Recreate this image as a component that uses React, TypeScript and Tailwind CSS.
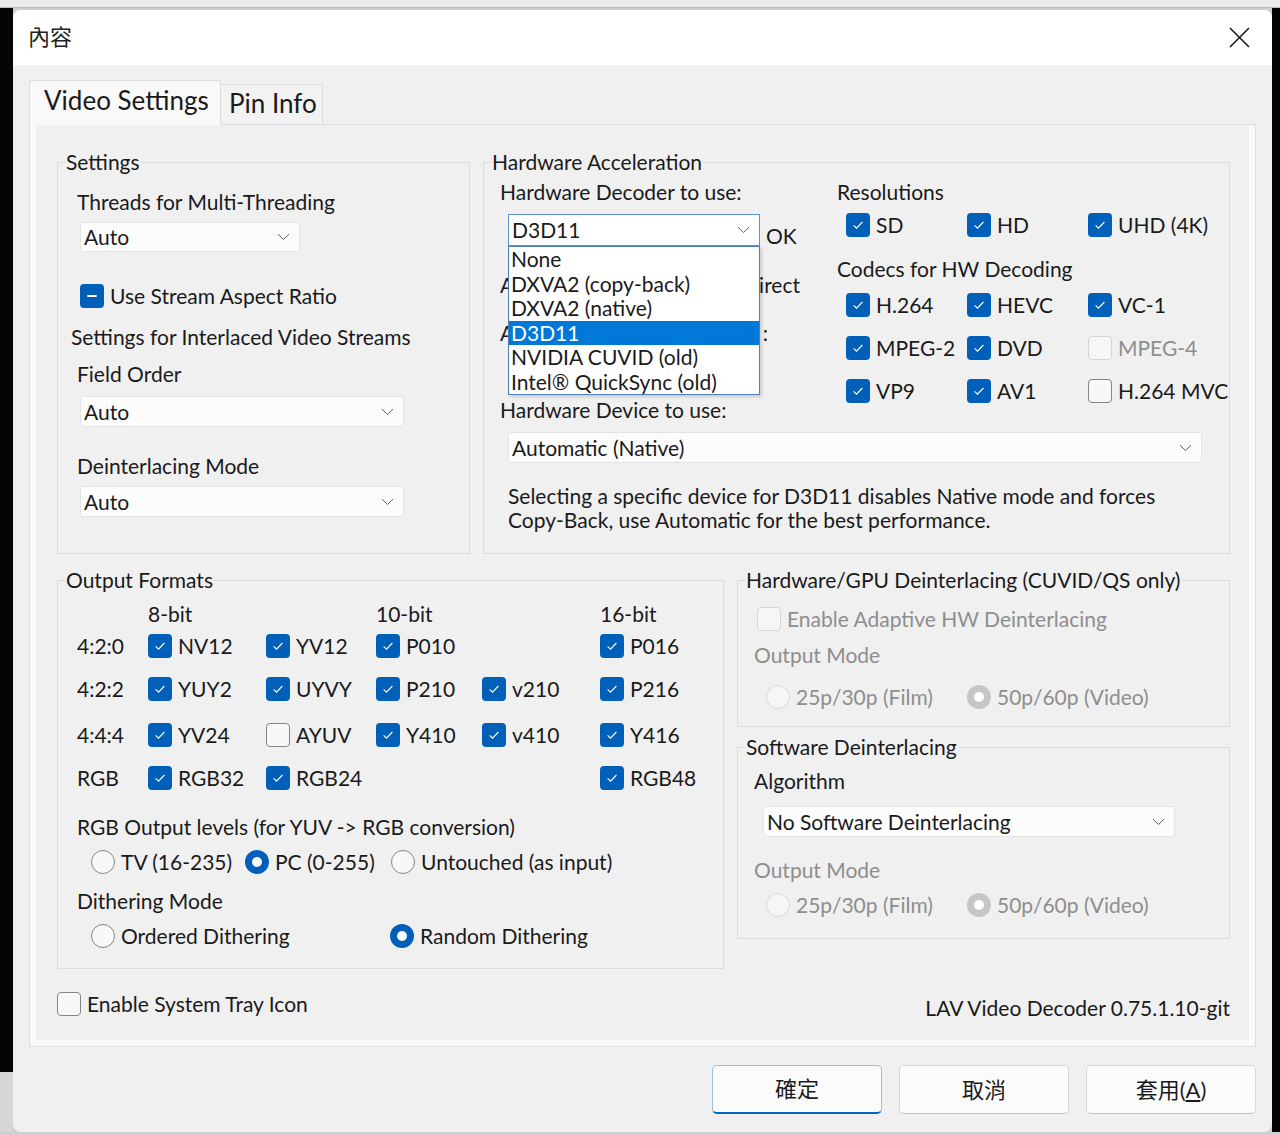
import React from 'react';

type CheckState = 'on' | 'off' | 'mixed';

const Box = ({ state, disabled }: { state: CheckState; disabled?: boolean }) => {
    if (state === 'off') {
        return (
            <span
                className={`w-[24px] h-[24px] rounded-[4px] border shrink-0 ${disabled ? 'border-[#d6d6d6] bg-[#f6f6f6]' : 'border-[#858585] bg-[#f8f8f8]'}`}
            />
        );
    }
    return (
        <span className="w-[24px] h-[24px] rounded-[4px] bg-[#005fb8] flex items-center justify-center shrink-0">
            {state === 'on' ? (
                <svg width="14" height="14" viewBox="0 0 14 14">
                    <path d="M2.6 7.3l2.9 2.8 5.9-6.1" fill="none" stroke="#fff" strokeWidth="1.1" />
                </svg>
            ) : (
                <span className="w-[10px] h-[2px] bg-white rounded-full" />
            )}
        </span>
    );
};

const Check = ({ label, state = 'on', disabled }: { label: string; state?: CheckState; disabled?: boolean }) => (
    <div className="flex items-center gap-[6px] h-[24px] whitespace-nowrap">
        <Box state={state} disabled={disabled} />
        <span className={disabled ? 'text-[#8e8e8e]' : ''}>{label}</span>
    </div>
);

const Radio = ({ label, on, disabled }: { label: string; on?: boolean; disabled?: boolean }) => (
    <div className="flex items-center gap-[6px] h-[24px] whitespace-nowrap">
        {on ? (
            <span className={`w-[24px] h-[24px] rounded-full flex items-center justify-center shrink-0 ${disabled ? 'bg-[#c6c6c6]' : 'bg-[#005fb8]'}`}>
                <span className="w-[10px] h-[10px] rounded-full bg-white" />
            </span>
        ) : (
            <span className={`w-[24px] h-[24px] rounded-full border shrink-0 ${disabled ? 'border-[#d6d6d6] bg-[#f6f6f6]' : 'border-[#858585] bg-[#f8f8f8]'}`} />
        )}
        <span className={disabled ? 'text-[#8e8e8e]' : ''}>{label}</span>
    </div>
);

const Chevron = () => (
    <svg width="13" height="8" viewBox="0 0 13 8" className="shrink-0">
        <path d="M1 1.2l5.5 5.3 5.5-5.3" fill="none" stroke="#606060" strokeWidth="1" />
    </svg>
);

const Select = ({ value, className }: { value: string; className: string }) => (
    <div className={`flex items-center justify-between bg-[#fcfcfc] border border-[#e4e4e4] rounded-[3px] pl-[3px] pr-[9px] ${className}`}>
        <span>{value}</span>
        <Chevron />
    </div>
);

const Group = ({ title, className, children }: { title: string; className: string; children: React.ReactNode }) => (
    <fieldset className={`border border-[#dcdcdc] flex flex-col items-start shrink-0 ${className}`}>
        <legend className="ml-[7px] px-[1px] leading-[24px]">{title}</legend>
        {children}
    </fieldset>
);

const fmtCols = ['w-[118px]', 'w-[110px]', 'w-[106px]', 'w-[118px]', 'w-[100px]'];

const FormatRow = ({ label, cells, className }: { label: string; cells: (string | null | [string, CheckState])[]; className: string }) => (
    <div className={`flex items-center h-[24px] ml-[19px] ${className}`}>
        <span className="w-[71px]">{label}</span>
        {cells.map((c, i) => (
            <div key={i} className={fmtCols[i]}>
                {c === null ? null : Array.isArray(c) ? <Check label={c[0]} state={c[1]} /> : <Check label={c} />}
            </div>
        ))}
    </div>
);

const decoders = ['None', 'DXVA2 (copy-back)', 'DXVA2 (native)', 'D3D11', 'NVIDIA CUVID (old)', 'Intel® QuickSync (old)'];

const App = () => {
    return (
        <div className="w-[1280px] h-[1135px] bg-[#cfcfcf] overflow-hidden flex flex-col font-['Lato','Noto_Sans_CJK_TC',sans-serif] text-[21px] leading-[24px] text-[#1a1a1a]">
            <div className="h-[8px] bg-[#ebebeb] border-b border-[#b8b8b8] shrink-0" />
            <div className="flex h-[1124px] shrink-0">
                <div className="w-[13px] flex flex-col">
                    <div className="h-[1064px] bg-[#050505]" />
                    <div className="flex-1 bg-[#d6d6d6]" />
                </div>
                <div className="w-[1259px] h-[1122px] mt-[2px] rounded-[8px] overflow-hidden bg-[#f0f0f0] flex flex-col">
                    {/* title bar */}
                    <div className="h-[55px] bg-white flex items-center justify-between pl-[15px] pr-[22px] shrink-0">
                        <span className="text-[22px] text-[#222] -mt-[2px]">內容</span>
                        <svg width="21" height="21" viewBox="0 0 21 21">
                            <path d="M1 1l19 19M20 1L1 20" stroke="#1a1a1a" strokeWidth="1.6" />
                        </svg>
                    </div>

                    {/* tabs */}
                    <div className="flex items-end h-[44px] mt-[15px] ml-[16px] text-[26px] leading-[30px] relative z-10">
                        <div className="w-[192px] h-[45px] -mb-px bg-[#f9f9f9] border border-b-0 border-[#dedede] rounded-t-[3px] pl-[14px] pt-[4px]">
                            Video Settings
                        </div>
                        <div className="w-[102px] h-[40px] bg-[#f2f2f2] border border-l-0 border-b-0 border-[#dedede] pl-[8px] pt-[3px]">
                            Pin Info
                        </div>
                    </div>

                    {/* tab panel */}
                    <div className="ml-[16px] w-[1227px] h-[923px] border border-[#dedede] bg-[#f9f9f9] px-[6px] pb-[6px]">
                        <div className="h-[915px] bg-[#f0f0f0] pt-[25px] pl-[21px] flex flex-col">
                            {/* row 1 */}
                            <div className="flex gap-[13px]">
                                <Group title="Settings" className="w-[413px] h-[404px]">
                                    <span className="mt-[16px] ml-[19px]">Threads for Multi-Threading</span>
                                    <Select value="Auto" className="mt-[8px] ml-[22px] w-[220px] h-[30px]" />
                                    <div className="mt-[32px] ml-[22px]">
                                        <Check label="Use Stream Aspect Ratio" state="mixed" />
                                    </div>
                                    <span className="mt-[17px] ml-[13px]">Settings for Interlaced Video Streams</span>
                                    <span className="mt-[13px] ml-[19px]">Field Order</span>
                                    <Select value="Auto" className="mt-[10px] ml-[22px] w-[324px] h-[31px]" />
                                    <span className="mt-[27px] ml-[19px]">Deinterlacing Mode</span>
                                    <Select value="Auto" className="mt-[8px] ml-[22px] w-[324px] h-[31px]" />
                                </Group>

                                <Group title="Hardware Acceleration" className="w-[747px] h-[404px]">
                                    <div className="flex items-start w-full">
                                        <div className="w-[353px] flex flex-col items-start">
                                            <span className="mt-[6px] ml-[16px]">Hardware Decoder to use:</span>
                                            <div className="mt-[10px] ml-[24px] flex items-start">
                                                <div className="relative z-20">
                                                    <div className="w-[252px] h-[32px] bg-white border border-[#5c93cf] flex items-center justify-between pl-[3px] pr-[9px]">
                                                        <span>D3D11</span>
                                                        <Chevron />
                                                    </div>
                                                    <div className="absolute left-0 top-full w-[252px] bg-white border border-[#4d7fb8] shadow-[2px_2px_3px_rgba(0,0,0,0.15)]">
                                                        {decoders.map((d) => (
                                                            <div
                                                                key={d}
                                                                className={`h-[24.5px] leading-[24.5px] pl-[2px] whitespace-nowrap ${d === 'D3D11' ? 'bg-[#0078d7] text-white' : ''}`}
                                                            >
                                                                {d}
                                                            </div>
                                                        ))}
                                                    </div>
                                                </div>
                                                <span className="mt-[10px] ml-[6px]">OK</span>
                                            </div>
                                            {/* rows partly hidden by the open list */}
                                            <div className="mt-[25px] ml-[16px] w-[300px] flex justify-between">
                                                <span>A</span>
                                                <span>irect</span>
                                            </div>
                                            <div className="mt-[24px] ml-[16px] w-[268px] flex justify-between">
                                                <span>A</span>
                                                <span>:</span>
                                            </div>
                                            <span className="mt-[53px] ml-[16px]">Hardware Device to use:</span>
                                        </div>
                                        <div className="flex flex-col items-start">
                                            <span className="mt-[6px]">Resolutions</span>
                                            <div className="mt-[9px] ml-[9px] flex">
                                                <div className="w-[121px]"><Check label="SD" /></div>
                                                <div className="w-[121px]"><Check label="HD" /></div>
                                                <div className="w-[121px]"><Check label="UHD (4K)" /></div>
                                            </div>
                                            <span className="mt-[20px]">Codecs for HW Decoding</span>
                                            <div className="mt-[12px] ml-[9px] flex">
                                                <div className="w-[121px]"><Check label="H.264" /></div>
                                                <div className="w-[121px]"><Check label="HEVC" /></div>
                                                <div className="w-[121px]"><Check label="VC-1" /></div>
                                            </div>
                                            <div className="mt-[19px] ml-[9px] flex">
                                                <div className="w-[121px]"><Check label="MPEG-2" /></div>
                                                <div className="w-[121px]"><Check label="DVD" /></div>
                                                <div className="w-[121px]"><Check label="MPEG-4" state="off" disabled /></div>
                                            </div>
                                            <div className="mt-[19px] ml-[9px] flex">
                                                <div className="w-[121px]"><Check label="VP9" /></div>
                                                <div className="w-[121px]"><Check label="AV1" /></div>
                                                <div className="w-[121px]"><Check label="H.264 MVC" state="off" /></div>
                                            </div>
                                        </div>
                                    </div>
                                    <Select value="Automatic (Native)" className="mt-[10px] ml-[24px] w-[694px] h-[31px]" />
                                    <p className="mt-[21px] ml-[24px]">
                                        Selecting a specific device for D3D11 disables Native mode and forces
                                        <br />
                                        Copy-Back, use Automatic for the best performance.
                                    </p>
                                </Group>
                            </div>

                            {/* row 2 */}
                            <div className="flex gap-[13px] mt-[14px]">
                                <Group title="Output Formats" className="w-[667px] h-[401px]">
                                    <div className="mt-[10px] ml-[19px] flex h-[24px]">
                                        <span className="w-[71px]" />
                                        <span className="w-[228px]">8-bit</span>
                                        <span className="w-[224px]">10-bit</span>
                                        <span>16-bit</span>
                                    </div>
                                    <FormatRow label="4:2:0" cells={['NV12', 'YV12', 'P010', null, 'P016']} className="mt-[8px]" />
                                    <FormatRow label="4:2:2" cells={['YUY2', 'UYVY', 'P210', 'v210', 'P216']} className="mt-[19px]" />
                                    <FormatRow label="4:4:4" cells={['YV24', ['AYUV', 'off'], 'Y410', 'v410', 'Y416']} className="mt-[22px]" />
                                    <FormatRow label="RGB" cells={['RGB32', 'RGB24', null, null, 'RGB48']} className="mt-[19px]" />
                                    <span className="mt-[25px] ml-[19px]">RGB Output levels (for YUV -&gt; RGB conversion)</span>
                                    <div className="mt-[11px] ml-[33px] flex">
                                        <div className="w-[154px]"><Radio label="TV (16-235)" /></div>
                                        <div className="w-[146px]"><Radio label="PC (0-255)" on /></div>
                                        <Radio label="Untouched (as input)" />
                                    </div>
                                    <span className="mt-[15px] ml-[19px]">Dithering Mode</span>
                                    <div className="mt-[11px] ml-[33px] flex">
                                        <div className="w-[299px]"><Radio label="Ordered Dithering" /></div>
                                        <Radio label="Random Dithering" on />
                                    </div>
                                </Group>

                                <div className="flex flex-col">
                                    <Group title="Hardware/GPU Deinterlacing (CUVID/QS only)" className="w-[493px] h-[159px]">
                                        <div className="mt-[15px] ml-[19px]">
                                            <Check label="Enable Adaptive HW Deinterlacing" state="off" disabled />
                                        </div>
                                        <span className="mt-[12px] ml-[16px] text-[#8e8e8e]">Output Mode</span>
                                        <div className="mt-[18px] ml-[28px] flex">
                                            <div className="w-[201px]"><Radio label="25p/30p (Film)" disabled /></div>
                                            <Radio label="50p/60p (Video)" on disabled />
                                        </div>
                                    </Group>
                                    <Group title="Software Deinterlacing" className="w-[493px] h-[204px] mt-[8px]">
                                        <span className="mt-[10px] ml-[16px]">Algorithm</span>
                                        <Select value="No Software Deinterlacing" className="mt-[13px] ml-[25px] w-[412px] h-[31px]" />
                                        <span className="mt-[21px] ml-[16px] text-[#8e8e8e]">Output Mode</span>
                                        <div className="mt-[11px] ml-[28px] flex">
                                            <div className="w-[201px]"><Radio label="25p/30p (Film)" disabled /></div>
                                            <Radio label="50p/60p (Video)" on disabled />
                                        </div>
                                    </Group>
                                </div>
                            </div>

                            {/* bottom row */}
                            <div className="mt-[23px] pr-[19px] flex items-start justify-between">
                                <Check label="Enable System Tray Icon" state="off" />
                                <span className="mt-[4px]">LAV Video Decoder 0.75.1.10-git</span>
                            </div>
                        </div>
                    </div>

                    {/* buttons */}
                    <div className="flex justify-end gap-[17px] mt-[18px] pr-[16px] text-[22px]">
                        <button className="w-[170px] h-[49px] bg-[#fbfbfb] border border-[#9dbde0] border-b-2 border-b-[#0067c0] rounded-[5px] text-[#1a1a1a]">
                            確定
                        </button>
                        <button className="w-[170px] h-[49px] bg-[#fbfbfb] border border-[#d6d6d6] border-b-[#c2c2c2] rounded-[5px] text-[#1a1a1a]">
                            取消
                        </button>
                        <button className="w-[170px] h-[49px] bg-[#fbfbfb] border border-[#d6d6d6] border-b-[#c2c2c2] rounded-[5px] text-[#1a1a1a]">
                            套用(<span className="underline">A</span>)
                        </button>
                    </div>
                </div>
                <div className="w-[8px] bg-[#050505]" />
            </div>
        </div>
    );
};

export default App;
